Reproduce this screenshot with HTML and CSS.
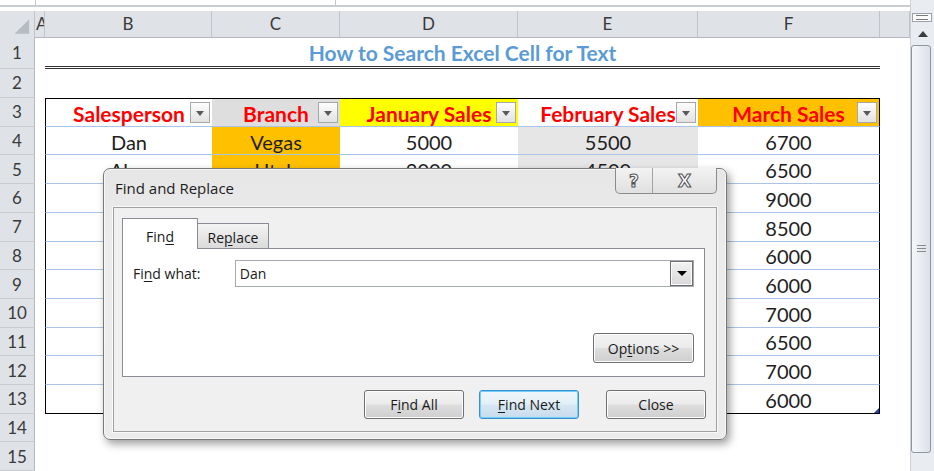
FILE: index.html
```html
<!DOCTYPE html>
<html>
<head>
<meta charset="utf-8">
<title>Find and Replace</title>
<link rel="stylesheet" href="styles.css">
</head>
<body>
<div class="sheet">
  <div class="topstrip">
    <div class="fb"><span class="fb-a"></span><span class="fb-b"></span></div>
    <div class="fb-line"></div>
  </div>
  <div class="row hdr">
    <div class="corner"><svg width="35" height="26" viewBox="0 0 35 26"><polygon points="30,8 30,23 15,23" fill="#b7bcc3"/></svg></div>
    <div class="ch cha">A</div>
    <div class="ch">B</div>
    <div class="ch">C</div>
    <div class="ch">D</div>
    <div class="ch">E</div>
    <div class="ch">F</div>
    <div class="ch"></div>
  </div>
  <div class="row r1">
    <div class="rh">1</div><div class="c"></div>
    <div class="c title">How to Search Excel Cell for Text</div>
    <div class="c"></div>
  </div>
  <div class="row r2">
    <div class="rh">2</div><div class="c"></div><div class="c"></div><div class="c"></div><div class="c"></div><div class="c"></div><div class="c"></div><div class="c"></div>
  </div>
  <div class="row r3">
    <div class="rh">3</div><div class="c"></div>
    <div class="c t top tb th">Salesperson<span class="fbtn"></span></div>
    <div class="c t top th lgry">Branch<span class="fbtn"></span></div>
    <div class="c t top th yel">January Sales<span class="fbtn"></span></div>
    <div class="c t top th">February Sales<span class="fbtn"></span></div>
    <div class="c t top tf th org">March Sales<span class="fbtn"></span></div>
    <div class="c"></div>
  </div>
  <div class="row rd">
    <div class="rh">4</div><div class="c"></div>
    <div class="c t tb">Dan</div><div class="c t org">Vegas</div><div class="c t">5000</div><div class="c t gry">5500</div><div class="c t tf">6700</div><div class="c"></div>
  </div>
  <div class="row rd">
    <div class="rh">5</div><div class="c"></div>
    <div class="c t tb">Alex</div><div class="c t org">Utah</div><div class="c t">3000</div><div class="c t gry">4500</div><div class="c t tf">6500</div><div class="c"></div>
  </div>
  <div class="row rd">
    <div class="rh">6</div><div class="c"></div>
    <div class="c t tb"></div><div class="c t"></div><div class="c t"></div><div class="c t"></div><div class="c t tf">9000</div><div class="c"></div>
  </div>
  <div class="row rd">
    <div class="rh">7</div><div class="c"></div>
    <div class="c t tb"></div><div class="c t"></div><div class="c t"></div><div class="c t"></div><div class="c t tf">8500</div><div class="c"></div>
  </div>
  <div class="row rd">
    <div class="rh">8</div><div class="c"></div>
    <div class="c t tb"></div><div class="c t"></div><div class="c t"></div><div class="c t"></div><div class="c t tf">6000</div><div class="c"></div>
  </div>
  <div class="row rd">
    <div class="rh">9</div><div class="c"></div>
    <div class="c t tb"></div><div class="c t"></div><div class="c t"></div><div class="c t"></div><div class="c t tf">6000</div><div class="c"></div>
  </div>
  <div class="row rd">
    <div class="rh">10</div><div class="c"></div>
    <div class="c t tb"></div><div class="c t"></div><div class="c t"></div><div class="c t"></div><div class="c t tf">7000</div><div class="c"></div>
  </div>
  <div class="row rd">
    <div class="rh">11</div><div class="c"></div>
    <div class="c t tb"></div><div class="c t"></div><div class="c t"></div><div class="c t"></div><div class="c t tf">6500</div><div class="c"></div>
  </div>
  <div class="row rd">
    <div class="rh">12</div><div class="c"></div>
    <div class="c t tb"></div><div class="c t"></div><div class="c t"></div><div class="c t"></div><div class="c t tf">7000</div><div class="c"></div>
  </div>
  <div class="row rd">
    <div class="rh">13</div><div class="c"></div>
    <div class="c t bot tb"></div><div class="c t bot"></div><div class="c t bot"></div><div class="c t bot"></div><div class="c t bot tf">6000<span class="handle"></span></div><div class="c"></div>
  </div>
  <div class="row rd">
    <div class="rh">14</div><div class="c"></div><div class="c"></div><div class="c"></div><div class="c"></div><div class="c"></div><div class="c"></div><div class="c"></div>
  </div>
  <div class="row rd">
    <div class="rh">15</div><div class="c"></div><div class="c"></div><div class="c"></div><div class="c"></div><div class="c"></div><div class="c"></div><div class="c"></div>
  </div>
</div>

<div class="sb">
  <div class="sb-top"></div>
  <div class="split"></div>
  <div class="up"></div>
  <div class="thumb"><span class="grip"></span></div>
  <div class="track"></div>
</div>

<div class="dlg">
  <div class="dlg-title">
    <span>Find and Replace</span>
    <div class="ctl"><span class="q">?</span><span class="x">X</span></div>
  </div>
  <div class="client">
    <div class="tabs">
      <div class="tab active">Fin<u>d</u></div>
      <div class="tab rep">Re<u>p</u>lace</div>
    </div>
    <div class="panel">
      <div class="fw">
        <span class="lbl">Fi<u>n</u>d what:</span>
        <div class="combo"><span class="val">Dan</span><span class="dd"></span></div>
      </div>
      <div class="optrow"><span class="btn opt">Op<u>t</u>ions &gt;&gt;</span></div>
    </div>
    <div class="btns">
      <span class="btn">F<u>i</u>nd All</span>
      <span class="btn def"><u>F</u>ind Next</span>
      <span class="btn close">Close</span>
    </div>
  </div>
</div>
</body>
</html>
```

FILE: styles.css
```css
* { box-sizing: border-box; }
html, body { margin: 0; padding: 0; }
body {
  width: 934px;
  height: 471px;
  overflow: hidden;
  background: #ffffff;
  font-family: Lato, "Liberation Sans", sans-serif;
  position: relative;
  display: flex;
}
.sheet { width: 910px; display: flex; flex-direction: column; }

.topstrip { height: 12px; display: flex; flex-direction: column; }
.fb { height: 5px; display: flex; }
.fb-a { width: 36px; border-right: 1px solid #c3c7cc; }
.fb-b { width: 300px; border-right: 1px solid #c3c7cc; }
.fb-line { height: 2px; background: #c9ccd1; }

.row {
  display: grid;
  grid-template-columns: 35px 10px 167px 128px 178px 180px 182px 30px;
  flex: none;
}
.hdr { height: 26px; }
.r1 { height: 32px; }
.r2 { height: 29px; }
.r3 { height: 29px; }
.rd { height: 28.7px; }

.corner, .ch, .rh {
  background: #dfe3e8;
  color: #3a3a3a;
  font-size: 17px;
  display: flex;
  align-items: center;
  justify-content: center;
}
.corner { border-right: 1px solid #c0c4ca; border-bottom: 1px solid #b4b9c0; }
.ch { border-right: 1px solid #c0c4ca; border-bottom: 1px solid #b4b9c0; }
.cha { justify-content: flex-start; overflow: hidden; padding-left: 1px; }
.rh { border-right: 1px solid #b4b9c0; border-bottom: 1px solid #c8ccd1; }

.c {
  display: flex;
  align-items: center;
  justify-content: center;
  font-size: 20px;
  color: #1e1e1e;
  position: relative;
  min-width: 0;
  white-space: nowrap;
  padding-top: 2px;
}
.title {
  grid-column: span 5;
  font-weight: 700;
  color: #5b9bd5;
  font-size: 21px;
  border-bottom: 3px double #333333;
  padding-top: 3px;
}
.t { border-bottom: 1px solid #a9c4e6; }
.top { border-top: 1px solid #000; }
.bot { border-bottom: 1px solid #000; }
.tb { border-left: 1px solid #000; }
.tf { border-right: 1px solid #000; }
.th { font-weight: 700; color: #ff0000; font-size: 21px; }
.org { background: #ffc000; }
.yel { background: #ffff00; }
.gry { background: #e6e6e6; }
.lgry { background: #dedede; }

.fbtn {
  position: absolute;
  right: 2px;
  top: 3px;
  width: 20px;
  height: 21px;
  border: 1px solid #a8a8a8;
  background: linear-gradient(#fdfdfd, #e2e2e2);
}
.fbtn::after {
  content: "";
  position: absolute;
  left: 5px;
  top: 8px;
  border-left: 4px solid transparent;
  border-right: 4px solid transparent;
  border-top: 5px solid #5a5a5a;
}
.handle {
  position: absolute;
  right: 0;
  bottom: 0;
  width: 0;
  height: 0;
  border-left: 5px solid transparent;
  border-bottom: 5px solid #1f3f9a;
}

/* scrollbar */
.sb {
  width: 24px;
  height: 471px;
  background: #e9ecf0;
  border-left: 1px solid #cdd1d6;
  display: flex;
  flex-direction: column;
}
.sb-top { height: 13px; }
.split {
  height: 9px;
  margin: 0 2px 0 1px;
  border: 1px solid #9aa1a9;
  background: #fbfbfc;
  display: flex;
  align-items: center;
  justify-content: center;
}
.split::after {
  content: "";
  width: 12px;
  height: 3px;
  border-top: 1px solid #7a7a7a;
  border-bottom: 1px solid #7a7a7a;
}
.up { height: 23px; display: flex; align-items: center; justify-content: center; }
.up::after {
  content: "";
  border-left: 5px solid transparent;
  border-right: 5px solid transparent;
  border-bottom: 6px solid #3c3c3c;
}
.thumb {
  height: 408px;
  margin-right: 3px;
  border: 1px solid #8f96a0;
  border-radius: 3px;
  background: linear-gradient(90deg, #f5f7fa, #dce1e8);
  display: flex;
  align-items: center;
  justify-content: center;
}
.grip {
  width: 9px;
  height: 8px;
  background: repeating-linear-gradient(#8a8a8a 0 1px, transparent 1px 3px);
}
.track { flex: 1; }

/* dialog */
.dlg {
  position: absolute;
  left: 103px;
  top: 168px;
  width: 624px;
  height: 272px;
  border: 1px solid #787878;
  border-radius: 7px;
  background: linear-gradient(#e6e6e6, #ececec 30%, #ebebeb);
  box-shadow: inset 0 0 0 1px #f8f8f8, 3px 4px 9px rgba(0, 0, 0, 0.38);
  display: flex;
  flex-direction: column;
  font-family: "Open Sans", "Noto Sans", sans-serif;
  color: #1a1a1a;
}
.dlg-title {
  height: 38px;
  padding-left: 11px;
  display: flex;
  align-items: center;
  font-size: 15px;
  color: #1c1c1c;
  position: relative;
}
.ctl {
  position: absolute;
  top: -1px;
  right: 9px;
  width: 102px;
  height: 26px;
  border: 1px solid #8a8a8a;
  border-top: none;
  border-radius: 0 0 5px 5px;
  background: linear-gradient(#f3f3f3, #e0e0e0);
  display: flex;
}
.ctl span {
  display: flex;
  align-items: center;
  justify-content: center;
  font-family: "DejaVu Sans", sans-serif;
  font-weight: 700;
  font-size: 17px;
  color: #ffffff;
  -webkit-text-stroke: 1.1px #555555;
}
.q { width: 37px; border-right: 1px solid #a3a3a3; }
.x { flex: 1; }

.client {
  margin: 0 9px 0 9px;
  height: 225px;
  border: 1px solid #a0a0a0;
  background: #f0f0f0;
  box-shadow: 0 0 0 1px #fafafa;
  padding: 10px 11px 0 8px;
  display: flex;
  flex-direction: column;
}
.tabs {
  display: flex;
  align-items: flex-end;
  height: 31px;
  margin-bottom: -1px;
  position: relative;
  z-index: 1;
  font-size: 14px;
}
.tab {
  display: flex;
  align-items: center;
  justify-content: center;
  border: 1px solid #898c95;
}
.tab.active {
  width: 76px;
  height: 31px;
  border-bottom: none;
  background: #ffffff;
  padding-top: 4px;
}
.tab.rep {
  width: 71px;
  height: 26px;
  border-left: none;
  background: linear-gradient(#f4f4f4, #dadada);
  padding-top: 2px;
}
.panel {
  height: 129px;
  border: 1px solid #898c95;
  background: #ffffff;
  padding: 11px 10px 0 10px;
}
.fw { display: flex; align-items: center; font-size: 14px; }
.lbl { width: 102px; }
.combo {
  width: 460px;
  height: 27px;
  border: 1px solid #a4a9b0;
  background: #fff;
  display: flex;
  align-items: center;
  padding-left: 4px;
}
.val { flex: 1; }
.dd {
  width: 23px;
  height: 25px;
  border: 1px solid #6f6f6f;
  background: linear-gradient(#f2f2f2, #d9d9d9);
  display: flex;
  align-items: center;
  justify-content: center;
  box-shadow: inset 0 0 0 1px #fbfbfb;
}
.dd::after {
  content: "";
  border-left: 5px solid transparent;
  border-right: 5px solid transparent;
  border-top: 5px solid #000;
}
.optrow { display: flex; justify-content: flex-end; margin-top: 46px; }
.btn {
  display: flex;
  align-items: center;
  justify-content: center;
  width: 100px;
  height: 29px;
  border: 1px solid #707070;
  border-radius: 3px;
  background: linear-gradient(#f3f3f3 0%, #ebebeb 48%, #dddddd 52%, #cfcfcf 100%);
  box-shadow: inset 0 0 0 1px #fcfcfc;
  font-size: 14px;
  color: #1a1a1a;
}
.opt { width: 101px; height: 30px; }
.btns {
  display: flex;
  justify-content: flex-end;
  margin-top: 13px;
  margin-right: -1px;
  gap: 15px;
}
.def {
  border-color: #3c8fd0;
  box-shadow: inset 0 0 0 1px #6fd0f7;
  background: linear-gradient(#eef6fb 0%, #e4eff7 48%, #d6e6f2 52%, #c9dcec 100%);
}
.close { margin-left: 12px; }
u { text-decoration: underline; text-underline-offset: 2px; }
```
